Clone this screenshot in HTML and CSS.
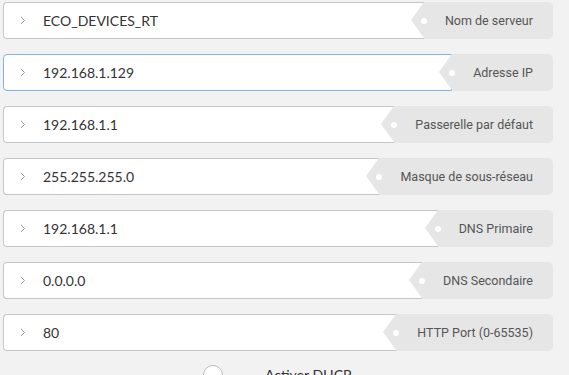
FILE: index.html
```html
<!DOCTYPE html>
<html>
<head>
<meta charset="utf-8">
<link rel="stylesheet" href="styles.css">
</head>
<body>
<div class="form">
  <div class="row">
    <div class="field"><svg class="chev" width="6" height="9" viewBox="0 0 6 9"><path d="M1 1l3.5 3.5L1 8" fill="none" stroke="#9a9a9a" stroke-width="1"/></svg><span class="val">ECO_DEVICES_RT</span></div>
    <div class="tag">Nom de serveur</div>
  </div>
  <div class="row">
    <div class="field focus"><svg class="chev" width="6" height="9" viewBox="0 0 6 9"><path d="M1 1l3.5 3.5L1 8" fill="none" stroke="#9a9a9a" stroke-width="1"/></svg><span class="val">192.168.1.129</span></div>
    <div class="tag">Adresse IP</div>
  </div>
  <div class="row">
    <div class="field"><svg class="chev" width="6" height="9" viewBox="0 0 6 9"><path d="M1 1l3.5 3.5L1 8" fill="none" stroke="#9a9a9a" stroke-width="1"/></svg><span class="val">192.168.1.1</span></div>
    <div class="tag">Passerelle par défaut</div>
  </div>
  <div class="row">
    <div class="field"><svg class="chev" width="6" height="9" viewBox="0 0 6 9"><path d="M1 1l3.5 3.5L1 8" fill="none" stroke="#9a9a9a" stroke-width="1"/></svg><span class="val">255.255.255.0</span></div>
    <div class="tag">Masque de sous-réseau</div>
  </div>
  <div class="row">
    <div class="field"><svg class="chev" width="6" height="9" viewBox="0 0 6 9"><path d="M1 1l3.5 3.5L1 8" fill="none" stroke="#9a9a9a" stroke-width="1"/></svg><span class="val">192.168.1.1</span></div>
    <div class="tag">DNS Primaire</div>
  </div>
  <div class="row">
    <div class="field"><svg class="chev" width="6" height="9" viewBox="0 0 6 9"><path d="M1 1l3.5 3.5L1 8" fill="none" stroke="#9a9a9a" stroke-width="1"/></svg><span class="val">0.0.0.0</span></div>
    <div class="tag">DNS Secondaire</div>
  </div>
  <div class="row">
    <div class="field"><svg class="chev" width="6" height="9" viewBox="0 0 6 9"><path d="M1 1l3.5 3.5L1 8" fill="none" stroke="#9a9a9a" stroke-width="1"/></svg><span class="val">80</span></div>
    <div class="tag">HTTP Port (0-65535)</div>
  </div>
  <div class="dhcp">
    <span class="radio"></span>
    <span class="dhcp-label">Activer DHCP</span>
  </div>
</div>
</body>
</html>
```
FILE: styles.css
```css
html, body {
  margin: 0;
  padding: 0;
  background: #f2f2f2;
  overflow: hidden;
}
.form {
  display: flex;
  flex-direction: column;
  gap: 15px;
  padding: 2px 16px 0 3px;
}
.row {
  display: flex;
  height: 37px;
}
.field {
  flex: 1;
  display: flex;
  align-items: center;
  background: #fff;
  border: 1px solid #c6c6c6;
  border-right: none;
  border-radius: 4px 0 0 4px;
  box-sizing: border-box;
  padding-left: 16px;
}
.field.focus {
  border-color: #84b3dd;
  border-right: 1px solid #84b3dd;
}
.chev {
  display: block;
  margin-right: 17px;
}
.val {
  font-family: Lato, "Liberation Sans", sans-serif;
  font-size: 14px;
  color: #333;
}
.tag {
  position: relative;
  display: flex;
  align-items: center;
  background: #e6e6e6;
  border-radius: 0 5px 5px 0;
  padding: 0 20px 0 21px;
  font-family: Roboto, "Liberation Sans", sans-serif;
  font-size: 12.5px;
  color: #555;
}
.tag::before {
  content: "";
  position: absolute;
  left: -13px;
  top: 0;
  border-right: 13px solid #e6e6e6;
  border-top: 18.5px solid transparent;
  border-bottom: 18.5px solid transparent;
}
.tag::after {
  content: "";
  position: absolute;
  left: -3px;
  top: 50%;
  width: 6px;
  height: 6px;
  margin-top: -3px;
  border-radius: 50%;
  background: #fff;
}
.dhcp {
  display: flex;
  align-items: flex-start;
  padding-left: 200px;
  margin-top: -1px;
}
.radio {
  width: 20px;
  height: 20px;
  border: 1px solid #bbb;
  border-radius: 50%;
  background: #fff;
  box-sizing: border-box;
}
.dhcp-label {
  margin-left: 42px;
  margin-top: 1px;
  font-family: Lato, "Liberation Sans", sans-serif;
  font-size: 14px;
  color: #333;
}
```
